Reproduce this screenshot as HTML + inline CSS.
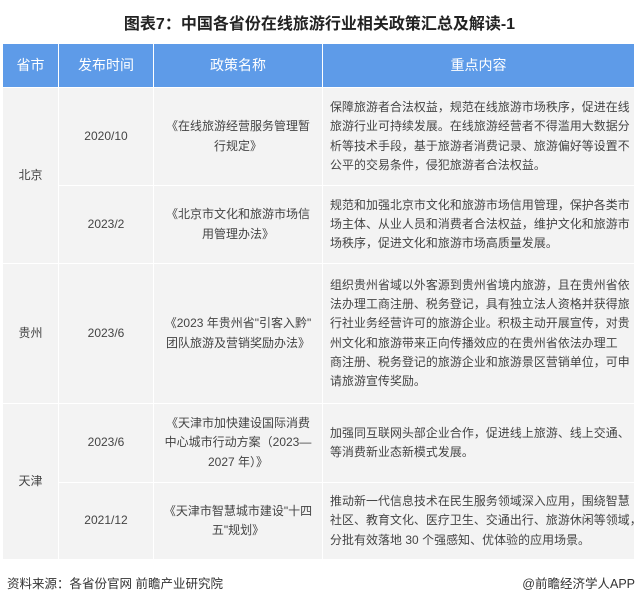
<!DOCTYPE html>
<html><head><meta charset="utf-8"><style>
body{margin:0;width:639px;height:602px;background:#fff;position:relative;overflow:hidden;font-family:"Liberation Sans","Noto Sans CJK SC",sans-serif;color:#444}
.t{position:absolute;top:10px;left:0;width:639px;text-align:center;font-size:16px;font-weight:bold;color:#222}
.c{position:absolute;background:#f3f3f3;box-sizing:border-box;display:flex;align-items:center;justify-content:center;text-align:center;font-size:12px;line-height:19.3px;white-space:nowrap}
.h{background:#5e9be8;color:#fff;font-size:14px}
.l{justify-content:flex-start;text-align:left;padding-left:7px;font-size:11.9px;letter-spacing:0.1px}
.f{position:absolute;top:573px;font-size:12.5px;color:#333}
</style></head><body>
<div class="t">图表7：中国各省份在线旅游行业相关政策汇总及解读-1</div>

<div class="c h" style="left:3px;top:44px;width:55px;height:43px">省市</div>
<div class="c h" style="left:59px;top:44px;width:94px;height:43px">发布时间</div>
<div class="c h" style="left:154px;top:44px;width:168px;height:43px">政策名称</div>
<div class="c h" style="left:323px;top:44px;width:311px;height:43px">重点内容</div>

<div class="c" style="left:3px;top:88px;width:55px;height:175px">北京</div>
<div class="c" style="left:59px;top:88px;width:94px;height:97px">2020/10</div>
<div class="c" style="left:154px;top:88px;width:168px;height:97px">《在线旅游经营服务管理暂<br>行规定》</div>
<div class="c l" style="left:323px;top:88px;width:311px;height:97px">保障旅游者合法权益，规范在线旅游市场秩序，促进在线<br>旅游行业可持续发展。在线旅游经营者不得滥用大数据分<br>析等技术手段，基于旅游者消费记录、旅游偏好等设置不<br>公平的交易条件，侵犯旅游者合法权益。</div>

<div class="c" style="left:59px;top:186px;width:94px;height:77px">2023/2</div>
<div class="c" style="left:154px;top:186px;width:168px;height:77px">《北京市文化和旅游市场信<br>用管理办法》</div>
<div class="c l" style="left:323px;top:186px;width:311px;height:77px">规范和加强北京市文化和旅游市场信用管理，保护各类市<br>场主体、从业人员和消费者合法权益，维护文化和旅游市<br>场秩序，促进文化和旅游市场高质量发展。</div>

<div class="c" style="left:3px;top:264px;width:55px;height:139px">贵州</div>
<div class="c" style="left:59px;top:264px;width:94px;height:139px">2023/6</div>
<div class="c" style="left:154px;top:264px;width:168px;height:139px">《2023 年贵州省"引客入黔"<br>团队旅游及营销奖励办法》</div>
<div class="c l" style="left:323px;top:264px;width:311px;height:139px">组织贵州省域以外客源到贵州省境内旅游，且在贵州省依<br>法办理工商注册、税务登记，具有独立法人资格并获得旅<br>行社业务经营许可的旅游企业。积极主动开展宣传，对贵<br>州文化和旅游带来正向传播效应的在贵州省依法办理工<br>商注册、税务登记的旅游企业和旅游景区营销单位，可申<br>请旅游宣传奖励。</div>

<div class="c" style="left:3px;top:404px;width:55px;height:155px">天津</div>
<div class="c" style="left:59px;top:404px;width:94px;height:78px">2023/6</div>
<div class="c" style="left:154px;top:404px;width:168px;height:78px">《天津市加快建设国际消费<br>中心城市行动方案（2023—<br>2027 年）》</div>
<div class="c l" style="left:323px;top:404px;width:311px;height:78px">加强同互联网头部企业合作，促进线上旅游、线上交通、<br>等消费新业态新模式发展。</div>

<div class="c" style="left:59px;top:483px;width:94px;height:76px">2021/12</div>
<div class="c" style="left:154px;top:483px;width:168px;height:76px">《天津市智慧城市建设"十四<br>五"规划》</div>
<div class="c l" style="left:323px;top:483px;width:311px;height:76px">推动新一代信息技术在民生服务领域深入应用，围绕智慧<br>社区、教育文化、医疗卫生、交通出行、旅游休闲等领域，<br>分批有效落地 30 个强感知、优体验的应用场景。</div>

<div class="f" style="left:7px">资料来源：各省份官网 前瞻产业研究院</div>
<div class="f" style="right:4px">@前瞻经济学人APP</div>
</body></html>
